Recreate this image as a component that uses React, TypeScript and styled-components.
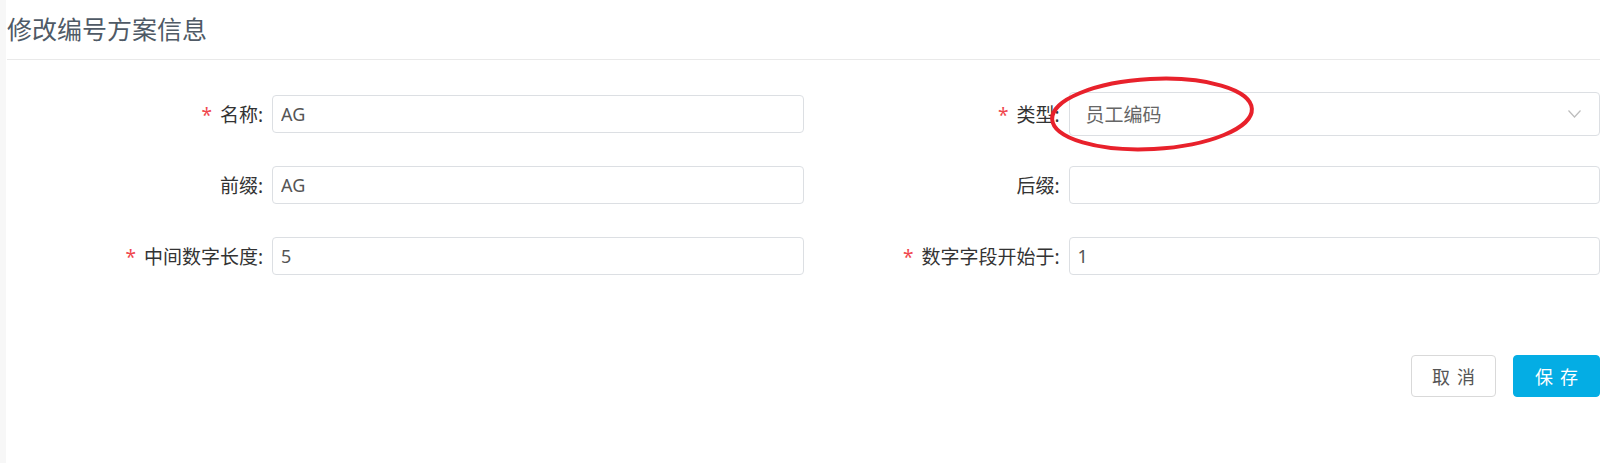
import React from "react";
import styled, { createGlobalStyle } from "styled-components";

const GlobalStyle = createGlobalStyle`
    html, body {
        margin: 0;
        padding: 0;
        background: #f7f7f7;
        font-family: "Noto Sans", "Noto Sans CJK SC", sans-serif;
    }
`;

const Panel = styled.div`
    margin-left: 6px;
    min-height: 463px;
    background: #ffffff;
    padding: 0 18px 0 1px;
    box-sizing: border-box;
`;

const Header = styled.div`
    height: 59px;
    display: flex;
    align-items: center;
    border-bottom: 1px solid #e9e9e9;
`;

const Title = styled.h3`
    margin: 0;
    font-size: 25px;
    font-weight: normal;
    color: #4f5a66;
    line-height: 1;
`;

const Form = styled.div`
    margin-top: 35px;
    display: grid;
    grid-template-columns: 1fr 1fr;
    row-gap: 33px;
`;

const Field = styled.div`
    display: flex;
    align-items: center;
    height: 38px;
`;

const Label = styled.label`
    flex: 0 0 265px;
    box-sizing: border-box;
    padding-right: 9px;
    text-align: right;
    font-size: 19px;
    color: #333;
    white-space: nowrap;
`;

const Star = styled.span`
    color: #f0474e;
    margin-right: 8px;
`;

const Input = styled.input`
    flex: 1;
    min-width: 0;
    height: 38px;
    box-sizing: border-box;
    border: 1px solid #dcdfe3;
    border-radius: 4px;
    padding: 0 8px;
    font-family: inherit;
    font-size: 18px;
    color: #555;
    outline: none;
    background: #fff;
`;

const SelectBox = styled.div`
    flex: 1;
    position: relative;
    height: 44px;
    box-sizing: border-box;
    border: 1px solid #dcdfe3;
    border-radius: 4px;
    padding: 0 18px 0 16px;
    display: flex;
    align-items: center;
    justify-content: space-between;
    font-size: 19px;
    color: #666;
    background: #fff;
`;

const Mark = styled.svg`
    position: absolute;
    left: -21px;
    top: -17px;
    width: 206px;
    height: 76px;
    pointer-events: none;
    overflow: visible;
`;

const Footer = styled.div`
    margin-top: 80px;
    display: flex;
    justify-content: flex-end;
    gap: 17px;
`;

const Button = styled.button<{primary?: boolean}>`
    height: 42px;
    width: ${props => props.primary ? "87px" : "85px"};
    box-sizing: border-box;
    border-radius: 4px;
    border: 1px solid ${props => props.primary ? "#04ade4" : "#d9d9d9"};
    background: ${props => props.primary ? "#04ade4" : "#fff"};
    color: ${props => props.primary ? "#fff" : "#555"};
    font-family: inherit;
    font-size: 18px;
    letter-spacing: 7px;
    padding: 0 0 0 7px;
    cursor: pointer;
`;

interface IField {
    label: string;
    required?: boolean;
    value: string;
}

const TextField = (props: IField) => (
    <Field>
        <Label>
            {props.required && <Star>*</Star>}
            {props.label}:
        </Label>
        <Input defaultValue={props.value} />
    </Field>
);

export default function App() {
    return (
        <>
            <GlobalStyle />
            <Panel>
                <Header>
                    <Title>修改编号方案信息</Title>
                </Header>
                <Form>
                    <TextField label="名称" required value="AG" />
                    <Field>
                        <Label><Star>*</Star>类型:</Label>
                        <SelectBox>
                            <span>员工编码</span>
                            <svg width="13" height="8" viewBox="0 0 13 8">
                                <path d="M0.5 0.5 L6.5 7 L12.5 0.5" fill="none" stroke="#bdbdbd" strokeWidth="1.2" />
                            </svg>
                            <Mark viewBox="0 0 206 76">
                                <ellipse cx="103" cy="38" rx="100" ry="35" fill="none" stroke="#e8212b" strokeWidth="4" transform="rotate(-3 103 38)" />
                            </Mark>
                        </SelectBox>
                    </Field>
                    <TextField label="前缀" value="AG" />
                    <TextField label="后缀" value="" />
                    <TextField label="中间数字长度" required value="5" />
                    <TextField label="数字字段开始于" required value="1" />
                </Form>
                <Footer>
                    <Button>取消</Button>
                    <Button primary>保存</Button>
                </Footer>
            </Panel>
        </>
    );
}
